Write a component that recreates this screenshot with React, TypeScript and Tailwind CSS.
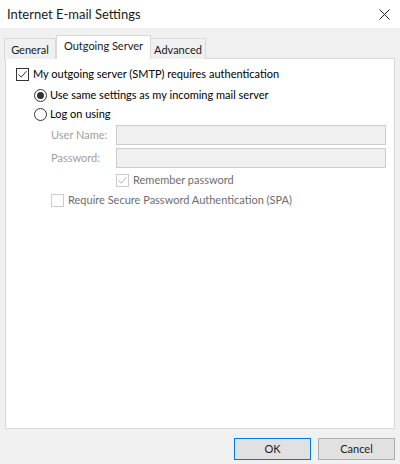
function CheckBox({ checked = false, disabled = false }: { checked?: boolean; disabled?: boolean }) {
  const border = disabled ? "border-[#cccccc]" : "border-[#333333]";
  return (
    <span className={`flex h-[13px] w-[13px] shrink-0 items-center justify-center border bg-white ${border}`}>
      {checked && (
        <svg width="11" height="11" viewBox="0 0 11 11" fill="none">
          <path d="M1.5 5.5 L4.2 8.2 L9.5 2.2" stroke={disabled ? "#b8b8b8" : "#333333"} strokeWidth="1" />
        </svg>
      )}
    </span>
  );
}

function Radio({ checked = false }: { checked?: boolean }) {
  return (
    <span className="flex h-[13px] w-[13px] shrink-0 items-center justify-center rounded-full border border-[#333333] bg-white">
      {checked && <span className="h-[7px] w-[7px] rounded-full bg-[#333333]" />}
    </span>
  );
}

export default function App() {
  return (
    <div
      className="flex h-[464px] w-[400px] flex-col whitespace-nowrap bg-[#f0f0f0] text-[11px] text-black"
      style={{ fontFamily: '"Segoe UI", Lato, sans-serif' }}
    >
      {/* title bar */}
      <div className="flex h-[28px] items-center justify-between bg-white pl-[7px] pr-[10px]">
        <span className="text-[13px] leading-none text-[#1a1a1a]">Internet E-mail Settings</span>
        <svg width="11" height="11" viewBox="0 0 11 11" fill="none">
          <path d="M0.5 0.5 L10.5 10.5 M10.5 0.5 L0.5 10.5" stroke="#222" strokeWidth="1" />
        </svg>
      </div>

      <div className="flex flex-1 flex-col px-[5px] pt-[7px]">
        {/* tabs */}
        <div className="relative z-10 flex h-[24px] items-end">
          <div className="-ml-px flex h-[21px] w-[52px] items-center justify-center border border-b-0 border-[#d9d9d9] bg-[#f0f0f0] pt-[2px] text-[#1a1a1a]">
            General
          </div>
          <div className="flex h-[24px] w-[95px] items-center justify-center border border-b-0 border-[#d9d9d9] bg-white pb-[2px] text-[#1a1a1a]">
            Outgoing Server
          </div>
          <div className="flex h-[21px] w-[55px] items-center justify-center border border-b-0 border-l-0 border-[#d9d9d9] bg-[#f0f0f0] pt-[2px] text-[#1a1a1a]">
            Advanced
          </div>
        </div>

        {/* panel */}
        <div className="-mt-px flex h-[371px] flex-col border border-[#d9d9d9] bg-white pl-[10px]">
          <label className="mt-[6px] flex h-[18px] items-center gap-[4px]">
            <CheckBox checked />
            <span>My outgoing server (SMTP) requires authentication</span>
          </label>

          <div className="pl-[18px]">
            <label className="mt-[3px] flex h-[18px] items-center gap-[3px]">
              <Radio checked />
              <span>Use same settings as my incoming mail server</span>
            </label>
            <label className="mt-[1px] flex h-[18px] items-center gap-[3px]">
              <Radio />
              <span>Log on using</span>
            </label>

            <div className="pl-[17px] text-[#a0a0a0]">
              <div className="mt-[2px] flex h-[20px] items-center">
                <span className="w-[65px]">User Name:</span>
                <div className="h-[20px] w-[270px] border border-[#cccccc] bg-[#f0f0f0]" />
              </div>
              <div className="mt-[3px] flex h-[20px] items-center">
                <span className="w-[65px]">Password:</span>
                <div className="h-[20px] w-[270px] border border-[#cccccc] bg-[#f0f0f0]" />
              </div>
              <label className="mt-[5px] flex h-[14px] items-center gap-[4px] pl-[65px] text-[#6d6d6d]">
                <CheckBox checked disabled />
                <span>Remember password</span>
              </label>
              <label className="mt-[6px] flex h-[14px] items-center gap-[4px] text-[#6d6d6d]">
                <CheckBox disabled />
                <span>Require Secure Password Authentication (SPA)</span>
              </label>
            </div>
          </div>
        </div>

        {/* buttons */}
        <div className="mt-[9px] flex justify-end gap-[7px]">
          <button className="h-[22px] w-[77px] border border-[#0078d7] bg-[#e1e1e1] text-[#1a1a1a]">OK</button>
          <button className="h-[22px] w-[77px] border border-[#adadad] bg-[#e1e1e1] text-[#1a1a1a]">Cancel</button>
        </div>
      </div>
    </div>
  );
}
